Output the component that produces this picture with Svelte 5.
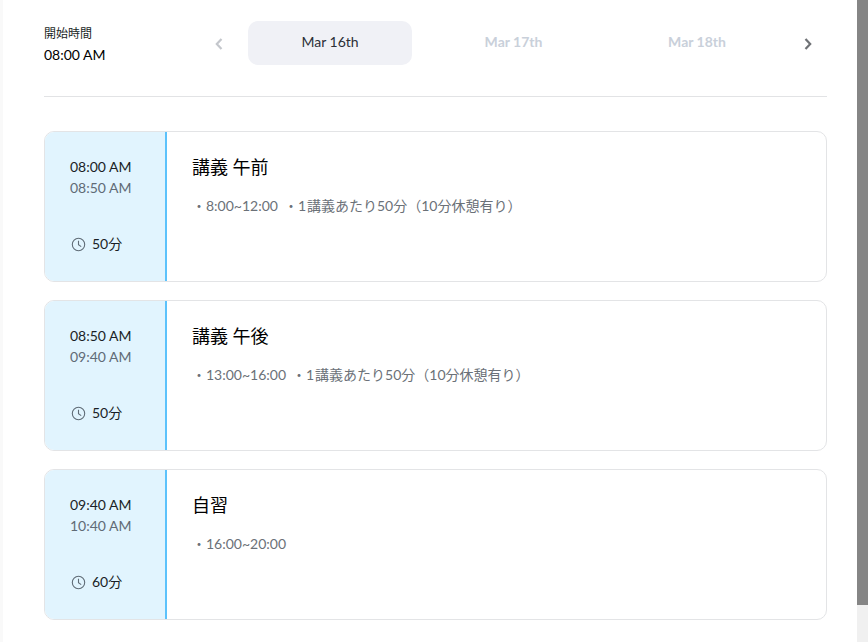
<script lang="ts">
  const days = [
    { label: "Mar 16th", active: true },
    { label: "Mar 17th", active: false },
    { label: "Mar 18th", active: false },
  ];

  const sessions = [
    {
      start: "08:00 AM",
      end: "08:50 AM",
      length: "50分",
      title: "講義 午前",
      notes: ["8:00~12:00", "1\u200a講義あたり50分（10分休憩有り）"],
    },
    {
      start: "08:50 AM",
      end: "09:40 AM",
      length: "50分",
      title: "講義 午後",
      notes: ["13:00~16:00", "1\u200a講義あたり50分（10分休憩有り）"],
    },
    {
      start: "09:40 AM",
      end: "10:40 AM",
      length: "60分",
      title: "自習",
      notes: ["16:00~20:00"],
    },
  ];
</script>

<div class="page">
  <div class="gutter"></div>

  <main class="content">
    <header class="top">
      <div class="start">
        <div class="start-label">開始時間</div>
        <div class="start-time">08:00 AM</div>
      </div>

      <div class="days">
        <svg class="chev" width="10" height="14" viewBox="0 0 10 14" fill="none" stroke="#c4c7cc" stroke-width="2.2">
          <path d="M7.5 2 L2.8 7 L7.5 12" />
        </svg>
        <div class="pills">
          {#each days as day}
            <div class="pill" class:active={day.active}>{day.label}</div>
          {/each}
        </div>
        <svg class="chev" width="10" height="14" viewBox="0 0 10 14" fill="none" stroke="#6f7276" stroke-width="2.2">
          <path d="M2.5 2 L7.2 7 L2.5 12" />
        </svg>
      </div>
    </header>

    <div class="cards">
      {#each sessions as s}
        <section class="card">
          <div class="times">
            <div class="time-start">{s.start}</div>
            <div class="time-end">{s.end}</div>
            <div class="length">
              <svg width="15" height="15" viewBox="0 0 15 15" fill="none" stroke="#5f6b76" stroke-width="1.1">
                <circle cx="7.5" cy="7.5" r="6.2" />
                <path d="M7.5 3.8 V7.8 L10.2 9.6" />
              </svg>
              <span>{s.length}</span>
            </div>
          </div>
          <div class="detail">
            <h2>{s.title}</h2>
            <div class="notes">
              {#each s.notes as note}
                <span class="note">・{note}</span>
              {/each}
            </div>
          </div>
        </section>
      {/each}
    </div>
  </main>

  <div class="scrollbar">
    <div class="thumb"></div>
  </div>
</div>

<style>
  :global(body) {
    margin: 0;
    background: #fff;
  }

  .page {
    display: flex;
    width: 868px;
    height: 642px;
    overflow: hidden;
    font-family: Lato, "Noto Sans CJK JP", sans-serif;
    color: #1a1f26;
  }

  .gutter {
    width: 3px;
    background: #f9f9f9;
  }

  .content {
    flex: 1;
    padding: 0 30px 0 41px;
  }

  .top {
    display: flex;
    align-items: flex-start;
    height: 96px;
    border-bottom: 1px solid #e2e3e5;
  }

  .start {
    width: 170px;
    padding-top: 26px;
  }

  .start-label {
    font-size: 12px;
    line-height: 16px;
  }

  .start-time {
    margin-top: 4px;
    font-size: 14px;
    line-height: 18px;
    color: #000;
  }

  .days {
    display: flex;
    align-items: center;
    margin-top: 21px;
    height: 44px;
  }

  .chev {
    flex: none;
    margin-top: 2px;
  }

  .pills {
    display: flex;
    gap: 19.5px;
    margin: 0 24px 0 24px;
  }

  .pill {
    width: 164px;
    height: 44px;
    line-height: 42px;
    text-align: center;
    font-size: 14px;
    font-weight: 700;
    color: #c9d0da;
    border-radius: 10px;
  }

  .pill.active {
    background: #f0f1f6;
    color: #2b2f36;
    font-weight: 400;
  }

  .cards {
    display: flex;
    flex-direction: column;
    gap: 18px;
    margin-top: 34px;
  }

  .card {
    display: flex;
    height: 151px;
    box-sizing: border-box;
    border: 1px solid #e3e4e6;
    border-radius: 10px;
    overflow: hidden;
  }

  .times {
    display: flex;
    flex-direction: column;
    flex: none;
    box-sizing: content-box;
    width: 95px;
    padding: 24px 0 0 25px;
    background: #e1f4fe;
    border-right: 2px solid #5cc2fb;
  }

  .time-start,
  .time-end {
    font-size: 14px;
    line-height: 21px;
  }

  .time-end {
    color: #5f6b76;
  }

  .length {
    display: flex;
    align-items: center;
    gap: 6px;
    margin-top: 36px;
    margin-left: 1px;
    font-size: 14px;
    line-height: 20px;
  }

  .detail {
    padding: 22px 0 0 25px;
  }

  h2 {
    margin: 0;
    font-size: 18px;
    font-weight: 400;
    line-height: 26px;
    color: #000;
  }

  .notes {
    display: flex;
    gap: 6px;
    margin-top: 16px;
    font-size: 14px;
    line-height: 20px;
    color: #6b7178;
  }

  .scrollbar {
    flex: none;
    width: 11px;
    background: #f0f0f0;
  }

  .thumb {
    height: 605px;
    background: #858585;
  }
</style>
